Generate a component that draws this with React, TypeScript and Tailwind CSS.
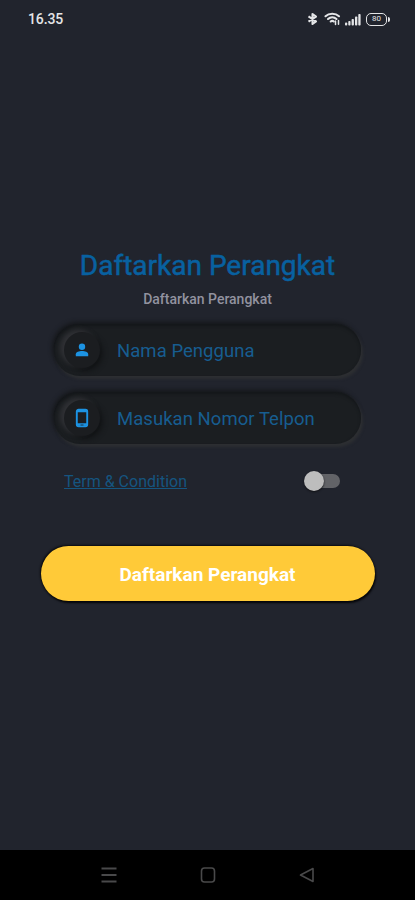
import type { ReactNode } from "react"

const PersonIcon = () => (
  <svg viewBox="0 0 20 20" className="size-5 fill-[#1c93e3]">
    <circle cx="10" cy="6.700" r="3.200" />
    <path d="M3.800 16.200v-2c0-2 3.200-3.200 6.200-3.200s6.200 1.200 6.200 3.200v2z" />
  </svg>
)

const PhoneIcon = () => (
  <svg viewBox="0 0 20 20" className="size-5" fill="none">
    <rect x="4.800" y="1.800" width="10.400" height="16.400" rx="1.800" stroke="#1c93e3" strokeWidth="1.900" />
    <path d="M4.500 3h11M4.500 16.500h11" stroke="#1c93e3" strokeWidth="2.600" />
    <path d="M8.500 17h3" stroke="#1b1d20" strokeWidth=".8" />
  </svg>
)

const StatusBar = () => (
  <div className="flex h-[38px] items-center justify-between pl-7 pr-[25px] text-[#e4e5e7]">
    <div className="text-[14px] font-medium leading-none tracking-[-0.1px]">16.35</div>
    <div className="flex items-center">
      <svg viewBox="0 0 11 14" className="h-[14px] w-[11px]" fill="none" stroke="currentColor" strokeWidth="2.1" strokeLinejoin="round">
        <path d="M1.500 4.300L9 9.400L5.500 12V2L9 4.600L1.500 9.700" />
      </svg>
      <svg viewBox="0 0 17 14" className="ml-[6px] h-[14px] w-[17px]" fill="none" stroke="currentColor" strokeWidth="2.1" strokeLinecap="round">
        <path d="M1.500 4.200C5 1 11.500 1 15 4.200M4 7C6.500 4.700 10 4.700 12.500 7M6.700 9.500C7.700 8.700 9 8.700 9.800 9.500" />
        <path d="M11.500 12.500V9M14.500 8.500V12.300" strokeWidth="1.500" />
      </svg>
      <svg viewBox="0 0 17 13" className="ml-[4px] h-[13px] w-[17px]" fill="currentColor">
        <rect x="0" y="9.500" width="2.200" height="3" rx=".8" />
        <rect x="3.300" y="8" width="2.200" height="4.500" rx=".8" />
        <rect x="6.600" y="6" width="2.300" height="6.500" rx=".8" />
        <rect x="10" y="3.500" width="2.300" height="9" rx=".8" />
        <rect x="13.300" y="1" width="2.300" height="11.500" rx=".8" />
      </svg>
      <div className="ml-[4px] flex h-[13px] w-[21px] items-center justify-center rounded-[5px] border-[1.5px] border-current text-[8px] leading-none">80</div>
      <div className="ml-px h-[5px] w-[2px] rounded-r bg-current" />
    </div>
  </div>
)

const Field = ({ icon, placeholder }: { icon: ReactNode; placeholder: string }) => (
  <div className="flex h-[52px] w-[307px] items-center rounded-full bg-[#1b1e21] pl-[10px] shadow-[2px_3px_3px_#2d2f32,-2px_-2px_4px_#15171a,inset_0_2px_3px_#14171a]">
    <div className="flex size-9 items-center justify-center rounded-full bg-[#1b1d20] shadow-[-4px_-2px_5px_#303135,3px_3px_5px_#121416]">
      {icon}
    </div>
    <div className="ml-[17px] pt-[2px] text-[18.500px] leading-none tracking-[0.05px] text-[#175d90]">{placeholder}</div>
  </div>
)

const App = () => {
  return (
    <div className="flex h-[900px] w-full flex-col overflow-hidden bg-[#21242d] font-['Roboto',sans-serif]">
      <StatusBar />
      <div className="flex flex-1 flex-col items-center pt-[210px]">
        <div className="h-[34px] whitespace-nowrap text-[28px] leading-[35px] text-[#0861a0] [-webkit-text-stroke:0.5px_#0861a0]">Daftarkan Perangkat</div>
        <div className="mt-[8px] h-[18px] text-[14px] font-medium leading-[18px] text-[#92929f]">Daftarkan Perangkat</div>
        <div className="mt-[16px] flex flex-col gap-4">
          <Field icon={<PersonIcon />} placeholder="Nama Pengguna" />
          <Field icon={<PhoneIcon />} placeholder="Masukan Nomor Telpon" />
        </div>
        <div className="mt-[27px] flex h-5 w-full items-center justify-between pl-16 pr-[75px]">
          <div className="pt-0.5 text-[16px] leading-5 text-[#155580] underline">Term &amp; Condition</div>
          <div className="flex h-[14px] w-[35px] items-center rounded-full bg-[#626367]">
            <div className="-ml-px size-5 shrink-0 rounded-full bg-[#bdbdbd] shadow-[0_1px_2px_#101114]" />
          </div>
        </div>
        <div className="mt-[55px] flex h-[55px] w-[334px] items-center justify-center rounded-full bg-[#ffca38] pt-[3px] text-[19px] font-bold text-white shadow-[1px_2px_2px_#050609,-1px_-1px_2px_#0b0c10]">
          Daftarkan Perangkat
        </div>
      </div>
      <div className="flex h-[50px] items-center justify-between bg-black pl-[101px] pr-[100px] text-[#49494a]">
        <svg viewBox="0 0 16 16" className="size-4" stroke="currentColor" strokeWidth="1.800">
          <path d="M.5 1.500h15M.5 8h15M.5 14.500h15" />
        </svg>
        <svg viewBox="0 0 16 16" className="size-4" fill="none" stroke="currentColor" strokeWidth="1.600">
          <rect x="1.500" y="1" width="13" height="14" rx="3" />
        </svg>
        <svg viewBox="0 0 16 16" className="size-4" fill="none" stroke="currentColor" strokeWidth="1.600" strokeLinejoin="round">
          <path d="M1.500 8L14 1.500v13z" />
        </svg>
      </div>
    </div>
  )
}

export default App
